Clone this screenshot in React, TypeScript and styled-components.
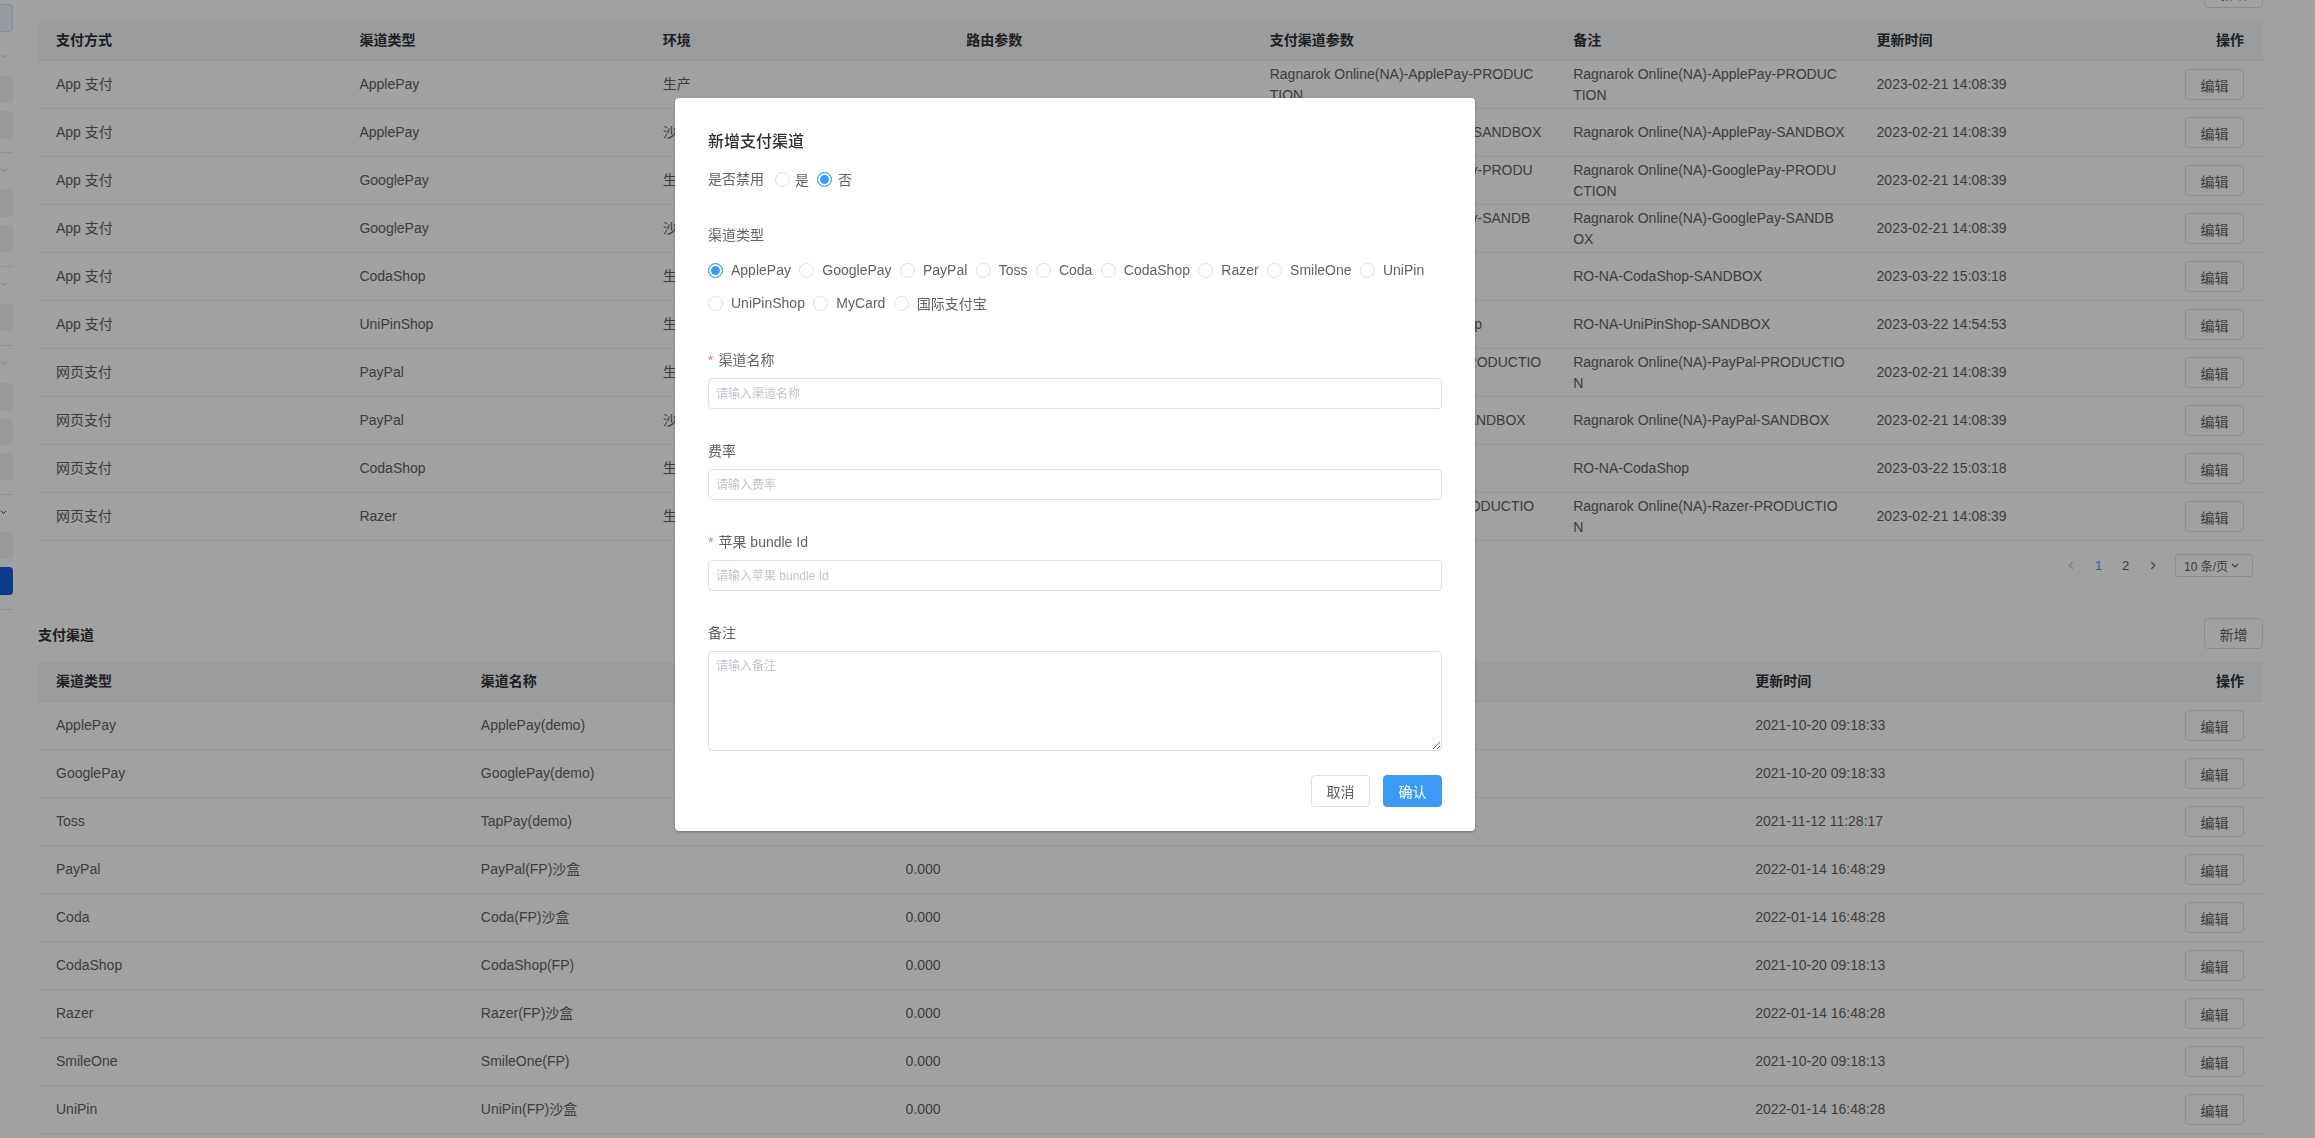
import React from 'react';
import styled, { createGlobalStyle } from 'styled-components';

const FONT = `"Liberation Sans", "Noto Sans CJK SC", sans-serif`;
const BLUE = '#3d9af4';

const GlobalStyle = createGlobalStyle`
  html, body {
    margin: 0;
    padding: 0;
    background: #fff;
    overflow: hidden;
  }
  body {
    font-family: ${FONT};
    font-size: 14px;
    color: #606266;
  }
  * {
    box-sizing: border-box;
  }
`;

const Page = styled.div`
  display: flex;
  align-items: flex-start;
  width: 2315px;
  height: 1138px;
  overflow: hidden;
`;

/* filter panel, scrolled so only its right edge shows */
const Sidebar = styled.aside`
  width: 13px;
  flex-shrink: 0;
  overflow: hidden;
`;

const SidebarInner = styled.div`
  width: 240px;
  margin-left: -227px;
`;

const FilterTop = styled.div`
  margin: 4px 0 7px;
  height: 28px;
  border-radius: 4px;
  background: #ecf5ff;
  border: 1px solid #c6e2ff;
`;

const FilterGroup = styled.div`
  border-bottom: 1px solid #e4e7ed;
`;

const FilterHeader = styled.div<{ $active?: boolean }>`
  height: 34px;
  display: flex;
  align-items: center;
  justify-content: flex-end;
  padding-right: 6px;
  color: ${(p) => (p.$active ? '#303133' : '#c0c4cc')};
`;

const FilterBody = styled.div`
  display: flex;
  flex-direction: column;
  gap: 8px;
  padding: 3px 0 14px;
`;

const FilterField = styled.div`
  height: 27px;
  border-radius: 4px;
  background: #f2f3f5;
`;

const FilterSubmit = styled.div`
  height: 28px;
  border-radius: 4px;
  background: #125cdb;
`;

const Main = styled.main`
  margin-left: 25px;
  margin-top: -23px;
  width: 2225px;
`;

const SectionBar = styled.div<{ $gap?: number }>`
  display: flex;
  align-items: center;
  justify-content: space-between;
  height: 31px;
  margin-top: ${(p) => p.$gap ?? 0}px;
`;

const SectionTitle = styled.h3`
  margin: 0;
  font-size: 14px;
  font-weight: 700;
  color: #303133;
`;

const PlainButton = styled.button<{ $primary?: boolean; $h?: number }>`
  width: 59px;
  height: ${(p) => p.$h ?? 31}px;
  padding: 0;
  font-family: ${FONT};
  font-size: 14px;
  color: ${(p) => (p.$primary ? '#fff' : '#606266')};
  background: ${(p) => (p.$primary ? BLUE : '#fff')};
  border: 1px solid ${(p) => (p.$primary ? BLUE : '#dcdfe6')};
  border-radius: 4px;
`;

const Table = styled.div`
  margin-top: 13px;
`;

const HeadRow = styled.div<{ $cols: number }>`
  display: grid;
  grid-template-columns: repeat(${(p) => p.$cols}, minmax(0, 1fr)) 101px;
  align-items: center;
  height: 40px;
  background: #f5f7fa;
  border-bottom: 1px solid #ebeef5;
  font-weight: 600;
  color: #303133;
`;

const BodyRow = styled.div<{ $cols: number }>`
  display: grid;
  grid-template-columns: repeat(${(p) => p.$cols}, minmax(0, 1fr)) 101px;
  align-items: center;
  height: 48px;
  border-bottom: 1px solid #ebeef5;
`;

const Cell = styled.div<{ $action?: boolean }>`
  padding: ${(p) => (p.$action ? '0 19px 0 0' : '0 8px 0 18px')};
  text-align: ${(p) => (p.$action ? 'right' : 'left')};
  line-height: 21px;
  white-space: pre-line;
`;

const Pager = styled.div`
  display: flex;
  justify-content: flex-end;
  align-items: center;
  height: 23px;
  margin-top: 13px;
  padding-right: 10px;
  font-size: 13px;
`;

const PagerItem = styled.span<{ $active?: boolean; $muted?: boolean }>`
  width: 27px;
  display: flex;
  justify-content: center;
  color: ${(p) => (p.$active ? BLUE : p.$muted ? '#c0c4cc' : '#606266')};
`;

const SizeSelect = styled.div`
  margin-left: 9px;
  width: 78px;
  height: 23px;
  display: flex;
  align-items: center;
  gap: 3px;
  padding-left: 8px;
  border: 1px solid #dcdfe6;
  border-radius: 3px;
  font-size: 12px;
`;

const Overlay = styled.div`
  position: fixed;
  inset: 0;
  background: rgba(0, 0, 0, 0.37);
`;

const Dialog = styled.div`
  position: fixed;
  left: 675px;
  top: 98px;
  width: 800px;
  padding: 33px 33px 24px;
  background: #fff;
  border-radius: 4px;
  box-shadow: 0 1px 3px rgba(0, 0, 0, 0.3);
`;

const DialogTitle = styled.div`
  font-size: 16px;
  line-height: 22px;
  font-weight: 500;
  color: #303133;
`;

const InlineField = styled.div`
  display: flex;
  align-items: center;
  height: 20px;
  margin-top: 16px;
`;

const FieldLabel = styled.div<{ $gap?: number }>`
  line-height: 20px;
  font-size: 14px;
  color: #606266;
  margin-top: ${(p) => p.$gap ?? 0}px;
`;

const Required = styled.span`
  color: #f56c6c;
  margin-right: 5px;
`;

const RadioGroup = styled.div<{ $gap: number; $top?: number; $left?: number }>`
  display: flex;
  flex-wrap: wrap;
  column-gap: ${(p) => p.$gap}px;
  row-gap: 13px;
  margin-top: ${(p) => p.$top ?? 0}px;
  margin-left: ${(p) => p.$left ?? 0}px;
`;

const RadioOption = styled.label<{ $gap: number }>`
  display: inline-flex;
  align-items: center;
  gap: ${(p) => p.$gap}px;
  height: 20px;
  font-size: 14px;
  color: #606266;
`;

const RadioDot = styled.span<{ $checked?: boolean }>`
  width: 15px;
  height: 15px;
  flex-shrink: 0;
  border-radius: 50%;
  border: 1px solid ${(p) => (p.$checked ? BLUE : '#dcdfe6')};
  background: ${(p) => (p.$checked ? BLUE : '#fff')};
  box-shadow: ${(p) => (p.$checked ? 'inset 0 0 0 2px #fff' : 'none')};
`;

const TextInput = styled.input`
  display: block;
  width: 100%;
  height: 31px;
  margin-top: 8px;
  padding: 0 7px;
  font-family: ${FONT};
  font-size: 12px;
  color: #606266;
  border: 1px solid #dcdfe6;
  border-radius: 4px;
  outline: none;
  &::placeholder {
    color: #c0c4cc;
  }
`;

const TextArea = styled.textarea`
  display: block;
  width: 100%;
  height: 100px;
  margin-top: 8px;
  padding: 5px 7px;
  font-family: ${FONT};
  font-size: 12px;
  line-height: 18px;
  color: #606266;
  border: 1px solid #dcdfe6;
  border-radius: 4px;
  outline: none;
  resize: vertical;
  &::placeholder {
    color: #c0c4cc;
  }
`;

const DialogFooter = styled.div`
  display: flex;
  justify-content: flex-end;
  gap: 13px;
  margin-top: 24px;
`;

const Chevron = ({ dir = 'down', size = 7 }: { dir?: 'down' | 'left' | 'right'; size?: number }) => {
  const pts = dir === 'down' ? '1,2 4,5 7,2' : dir === 'left' ? '5,1 2,4 5,7' : '3,1 6,4 3,7';
  return (
    <svg width={size} height={size} viewBox="0 0 8 8" fill="none" stroke="currentColor" strokeWidth="1.1">
      <polyline points={pts} />
    </svg>
  );
};

const payHead = ['支付方式', '渠道类型', '环境', '路由参数', '支付渠道参数', '备注', '更新时间'];

const payRows = [
  ['App 支付', 'ApplePay', '生产', '', 'Ragnarok Online(NA)-ApplePay-PRODUC\nTION', 'Ragnarok Online(NA)-ApplePay-PRODUC\nTION', '2023-02-21 14:08:39'],
  ['App 支付', 'ApplePay', '沙盒', '', 'Ragnarok Online(NA)-ApplePay-SANDBOX', 'Ragnarok Online(NA)-ApplePay-SANDBOX', '2023-02-21 14:08:39'],
  ['App 支付', 'GooglePay', '生产', '', 'Ragnarok Online(NA)-GooglePay-PRODU\nCTION', 'Ragnarok Online(NA)-GooglePay-PRODU\nCTION', '2023-02-21 14:08:39'],
  ['App 支付', 'GooglePay', '沙盒', '', 'Ragnarok Online(NA)-GooglePay-SANDB\nOX', 'Ragnarok Online(NA)-GooglePay-SANDB\nOX', '2023-02-21 14:08:39'],
  ['App 支付', 'CodaShop', '生产', '', 'RO-NA-CodaShop-SANDBOX', 'RO-NA-CodaShop-SANDBOX', '2023-03-22 15:03:18'],
  ['App 支付', 'UniPinShop', '生产', '', 'Ragnarok Online(NA)-UniPinShop', 'RO-NA-UniPinShop-SANDBOX', '2023-03-22 14:54:53'],
  ['网页支付', 'PayPal', '生产', '', 'Ragnarok Online(NA)-PayPal-PRODUCTIO\nN', 'Ragnarok Online(NA)-PayPal-PRODUCTIO\nN', '2023-02-21 14:08:39'],
  ['网页支付', 'PayPal', '沙盒', '', 'Ragnarok Online(NA)-PayPal-SANDBOX', 'Ragnarok Online(NA)-PayPal-SANDBOX', '2023-02-21 14:08:39'],
  ['网页支付', 'CodaShop', '生产', '', 'RO-NA-CodaShop', 'RO-NA-CodaShop', '2023-03-22 15:03:18'],
  ['网页支付', 'Razer', '生产', '', 'Ragnarok Online(NA)-Razer-PRODUCTIO\nN', 'Ragnarok Online(NA)-Razer-PRODUCTIO\nN', '2023-02-21 14:08:39'],
];

const channelHead = ['渠道类型', '渠道名称', '费率', '备注', '更新时间'];

const channelRows = [
  ['ApplePay', 'ApplePay(demo)', '0.000', '', '2021-10-20 09:18:33'],
  ['GooglePay', 'GooglePay(demo)', '0.000', '', '2021-10-20 09:18:33'],
  ['Toss', 'TapPay(demo)', '0.000', '', '2021-11-12 11:28:17'],
  ['PayPal', 'PayPal(FP)沙盒', '0.000', '', '2022-01-14 16:48:29'],
  ['Coda', 'Coda(FP)沙盒', '0.000', '', '2022-01-14 16:48:28'],
  ['CodaShop', 'CodaShop(FP)', '0.000', '', '2021-10-20 09:18:13'],
  ['Razer', 'Razer(FP)沙盒', '0.000', '', '2022-01-14 16:48:28'],
  ['SmileOne', 'SmileOne(FP)', '0.000', '', '2021-10-20 09:18:13'],
  ['UniPin', 'UniPin(FP)沙盒', '0.000', '', '2022-01-14 16:48:28'],
  ['UniPinShop', 'UniPinShop(FP)', '0.000', '', '2022-01-14 16:48:28'],
];

const channelTypes = ['ApplePay', 'GooglePay', 'PayPal', 'Toss', 'Coda', 'CodaShop', 'Razer', 'SmileOne', 'UniPin', 'UniPinShop', 'MyCard', '国际支付宝'];

const filterGroups = [2, 2, 1, 3];

const DataTable = ({ head, rows }: { head: string[]; rows: string[][] }) => (
  <Table>
    <HeadRow $cols={head.length}>
      {head.map((h) => (
        <Cell key={h}>{h}</Cell>
      ))}
      <Cell $action>操作</Cell>
    </HeadRow>
    {rows.map((r, i) => (
      <BodyRow key={i} $cols={head.length}>
        {r.map((c, j) => (
          <Cell key={j}>{c}</Cell>
        ))}
        <Cell $action>
          <PlainButton>编辑</PlainButton>
        </Cell>
      </BodyRow>
    ))}
  </Table>
);

const App: React.FC = () => {
  return (
    <>
      <GlobalStyle />
      <Page>
        <Sidebar>
          <SidebarInner>
            <FilterTop />
            {filterGroups.map((n, i) => (
              <FilterGroup key={i}>
                <FilterHeader>
                  <Chevron />
                </FilterHeader>
                <FilterBody>
                  {Array.from({ length: n }).map((_, k) => (
                    <FilterField key={k} />
                  ))}
                </FilterBody>
              </FilterGroup>
            ))}
            <FilterGroup>
              <FilterHeader $active>
                <Chevron />
              </FilterHeader>
              <FilterBody>
                <FilterField />
                <FilterSubmit />
              </FilterBody>
            </FilterGroup>
          </SidebarInner>
        </Sidebar>

        <Main>
          <SectionBar>
            <span />
            <PlainButton>新增</PlainButton>
          </SectionBar>
          <DataTable head={payHead} rows={payRows} />
          <Pager>
            <PagerItem $muted>
              <Chevron dir="left" size={9} />
            </PagerItem>
            <PagerItem $active>1</PagerItem>
            <PagerItem>2</PagerItem>
            <PagerItem>
              <Chevron dir="right" size={9} />
            </PagerItem>
            <SizeSelect>
              10 条/页
              <Chevron size={8} />
            </SizeSelect>
          </Pager>

          <SectionBar $gap={41}>
            <SectionTitle>支付渠道</SectionTitle>
            <PlainButton>新增</PlainButton>
          </SectionBar>
          <DataTable head={channelHead} rows={channelRows} />
        </Main>
      </Page>

      <Overlay />
      <Dialog>
        <DialogTitle>新增支付渠道</DialogTitle>
        <InlineField>
          <FieldLabel>是否禁用</FieldLabel>
          <RadioGroup $gap={8} $left={11}>
            <RadioOption $gap={5}>
              <RadioDot />是
            </RadioOption>
            <RadioOption $gap={6}>
              <RadioDot $checked />否
            </RadioOption>
          </RadioGroup>
        </InlineField>

        <FieldLabel $gap={36}>渠道类型</FieldLabel>
        <RadioGroup $gap={8.4} $top={15}>
          {channelTypes.map((t, i) => (
            <RadioOption key={t} $gap={8}>
              <RadioDot $checked={i === 0} />
              {t}
            </RadioOption>
          ))}
        </RadioGroup>

        <FieldLabel $gap={37}>
          <Required>*</Required>渠道名称
        </FieldLabel>
        <TextInput placeholder="请输入渠道名称" />

        <FieldLabel $gap={32}>费率</FieldLabel>
        <TextInput placeholder="请输入费率" />

        <FieldLabel $gap={32}>
          <Required>*</Required>苹果 bundle Id
        </FieldLabel>
        <TextInput placeholder="请输入苹果 bundle Id" />

        <FieldLabel $gap={32}>备注</FieldLabel>
        <TextArea placeholder="请输入备注" />

        <DialogFooter>
          <PlainButton $h={32}>取消</PlainButton>
          <PlainButton $h={32} $primary>
            确认
          </PlainButton>
        </DialogFooter>
      </Dialog>
    </>
  );
};

export default App;
